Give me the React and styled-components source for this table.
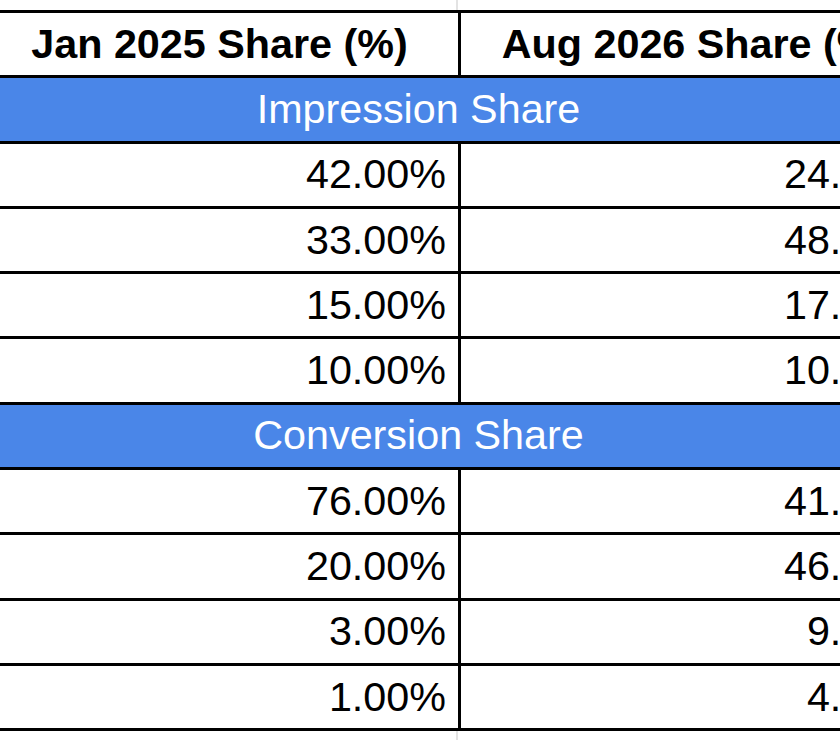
import React from 'react';
import styled, { createGlobalStyle } from 'styled-components';

const Global = createGlobalStyle`
  html, body { margin: 0; padding: 0; background: #fff; }
  body { width: 840px; height: 740px; overflow: hidden; }
`;

const Viewport = styled.div`
  width: 840px; height: 740px; overflow: hidden;
  font-family: Arial, "Liberation Sans", sans-serif;
  color: #000;
`;

const Shift = styled.div` margin-left: -22px; width: 958px; `;

const GridStrip = styled.div`
  display: grid; grid-template-columns: 480px 478px;
  height: ${({ h }) => h}px;
  div { border-right: 2px solid #e3e3e3; }
`;

const Sheet = styled.table`
  border-collapse: collapse; table-layout: fixed;
  width: 958px;
  td { border: 3px solid #000; padding: 0 12px; height: 65.3px; box-sizing: border-box; }
`;

const HeadCell = styled.td`
  font-size: 41.3px; font-weight: 700; text-align: center;
  && { padding-right: ${({ $pr }) => $pr || 12}px; }
`;

const SectionCell = styled.td`
  background: #4a86e8; color: #fff;
  font-size: 41.3px; text-align: center;
  && { padding-right: 92px; }
`;

const ValueCell = styled.td`
  font-size: 41.3px; text-align: right;
`;

const sections = [
  { title: 'Impression Share', rows: [['42.00%', '24.00%'], ['33.00%', '48.00%'], ['15.00%', '17.00%'], ['10.00%', '10.00%']] },
  { title: 'Conversion Share', rows: [['76.00%', '41.00%'], ['20.00%', '46.00%'], ['3.00%', '9.00%'], ['1.00%', '4.00%']] },
];

export default function App() {
  return (
    <Viewport>
      <Global />
      <Shift>
        <GridStrip h={10}><div /><div /></GridStrip>
        <Sheet>
          <colgroup><col style={{ width: 480 }} /><col style={{ width: 478 }} /></colgroup>
          <tbody>
            <tr>
              <HeadCell>Jan 2025 Share (%)</HeadCell>
              <HeadCell $pr={20}>Aug 2026 Share (%)</HeadCell>
            </tr>
            {sections.map(s => (
              <React.Fragment key={s.title}>
                <tr><SectionCell colSpan={2}>{s.title}</SectionCell></tr>
                {s.rows.map(([a, b]) => (
                  <tr key={a}>
                    <ValueCell>{a}</ValueCell>
                    <ValueCell>{b}</ValueCell>
                  </tr>
                ))}
              </React.Fragment>
            ))}
          </tbody>
        </Sheet>
        <GridStrip h={20}><div /><div /></GridStrip>
      </Shift>
    </Viewport>
  );
}
